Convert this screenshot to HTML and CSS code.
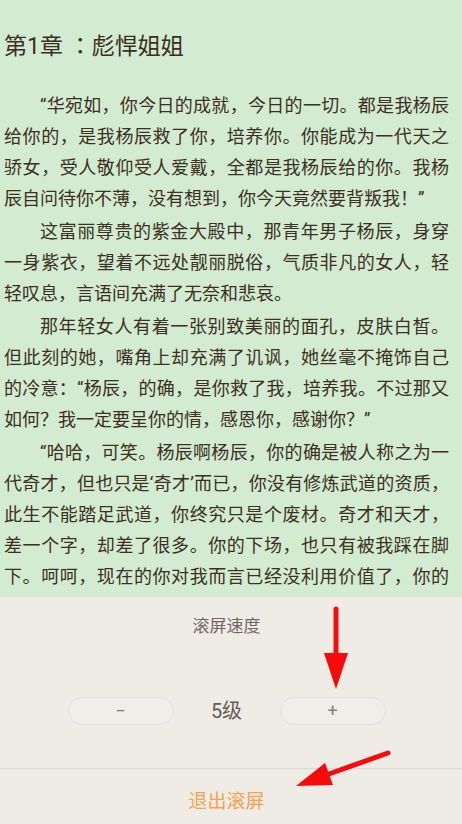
FILE: index.html
```html
<!DOCTYPE html>
<html lang="zh-CN">
<head>
<meta charset="utf-8">
<title>第1章 ：彪悍姐姐</title>
<link rel="stylesheet" href="styles.css">
</head>
<body>
<div class="screen">
  <main class="reader">
    <h1 class="chapter-title">第1章 ：彪悍姐姐</h1>
    <p class="para">“华宛如，你今日的成就，今日的一切。都是我杨辰给你的，是我杨辰救了你，培养你。你能成为一代天之骄女，受人敬仰受人爱戴，全都是我杨辰给的你。我杨辰自问待你不薄，没有想到，你今天竟然要背叛我！”</p>
    <p class="para">这富丽尊贵的紫金大殿中，那青年男子杨辰，身穿一身紫衣，望着不远处靓丽脱俗，气质非凡的女人，轻轻叹息，言语间充满了无奈和悲哀。</p>
    <p class="para">那年轻女人有着一张别致美丽的面孔，皮肤白皙。但此刻的她，嘴角上却充满了讥讽，她丝毫不掩饰自己的冷意：“杨辰，的确，是你救了我，培养我。不过那又如何？我一定要呈你的情，感恩你，感谢你？”</p>
    <p class="para para-cut">“哈哈，可笑。杨辰啊杨辰，你的确是被人称之为一代奇才，但也只是‘奇才’而已，你没有修炼武道的资质，此生不能踏足武道，你终究只是个废材。奇才和天才，差一个字，却差了很多。你的下场，也只有被我踩在脚下。呵呵，现在的你对我而言已经没利用价值了，你的</p>
  </main>
  <section class="scroll-panel">
    <div class="speed">
      <div class="speed-label">滚屏速度</div>
      <div class="speed-row">
        <button class="speed-btn" type="button">−</button>
        <span class="speed-level">5级</span>
        <button class="speed-btn" type="button">+</button>
      </div>
    </div>
    <div class="exit">退出滚屏</div>
  </section>
  <svg class="annotations" viewBox="0 0 462 824" width="462" height="824" aria-hidden="true">
    <g fill="#f70a0a" stroke="#f70a0a">
      <line x1="336" y1="609" x2="336" y2="656" stroke-width="5" stroke-linecap="round"/>
      <polygon points="324,653 348,653 336,689" stroke="none"/>
      <line x1="388" y1="753" x2="326" y2="775" stroke-width="5" stroke-linecap="round"/>
      <polygon points="296,786 325,763 333,785" stroke="none"/>
    </g>
  </svg>
</div>
</body>
</html>
```

FILE: styles.css
```css
* {
  box-sizing: border-box;
}

html, body {
  margin: 0;
  padding: 0;
}

body {
  width: 462px;
  height: 824px;
  overflow: hidden;
  font-family: "Roboto", "Noto Sans CJK SC", sans-serif;
}

.screen {
  position: relative;
  width: 462px;
  height: 824px;
  display: flex;
  flex-direction: column;
}

.reader {
  flex: 1 1 auto;
  min-height: 0;
  overflow: hidden;
  background: #d3ebd1;
  color: #3b3022;
  padding: 32px 13px 0 4px;
}

.chapter-title {
  margin: 0 0 28px 0;
  font-family: "Roboto", "Noto Sans CJK JP", "Noto Sans CJK SC", sans-serif;
  font-feature-settings: "locl" 0;
  font-size: 23px;
  line-height: 30px;
  font-weight: 400;
  color: #3a2f21;
}

.para {
  margin: 0 0 2px 0;
  font-size: 18px;
  line-height: 31px;
  text-indent: 2em;
  text-align: justify;
}

.para-cut {
  text-align-last: justify;
}

.scroll-panel {
  flex: 0 0 227px;
  background: #efebe5;
  display: flex;
  flex-direction: column;
}

.speed {
  padding: 17px 9px 0 0;
}

.speed-label {
  text-align: center;
  font-size: 17px;
  line-height: 24px;
  color: #6f6864;
}

.speed-row {
  margin-top: 59px;
  display: flex;
  justify-content: center;
  align-items: center;
  gap: 36px;
}

.speed-btn {
  width: 106px;
  height: 28px;
  border: 1px solid #e4e0da;
  border-radius: 14px;
  background: #f1ede8;
  color: #85807b;
  font-family: "Roboto", sans-serif;
  font-size: 18px;
  line-height: 26px;
  padding: 0;
}

.speed-level {
  width: 34px;
  text-align: center;
  font-size: 20px;
  line-height: 28px;
  color: #625d59;
}

.exit {
  margin-top: 43px;
  border-top: 1px solid #dcd8d2;
  padding: 21px 9px 0 0;
  text-align: center;
  font-size: 19px;
  line-height: 24px;
  color: #f5a34d;
}

.annotations {
  position: absolute;
  left: 0;
  top: 0;
  pointer-events: none;
}
```
